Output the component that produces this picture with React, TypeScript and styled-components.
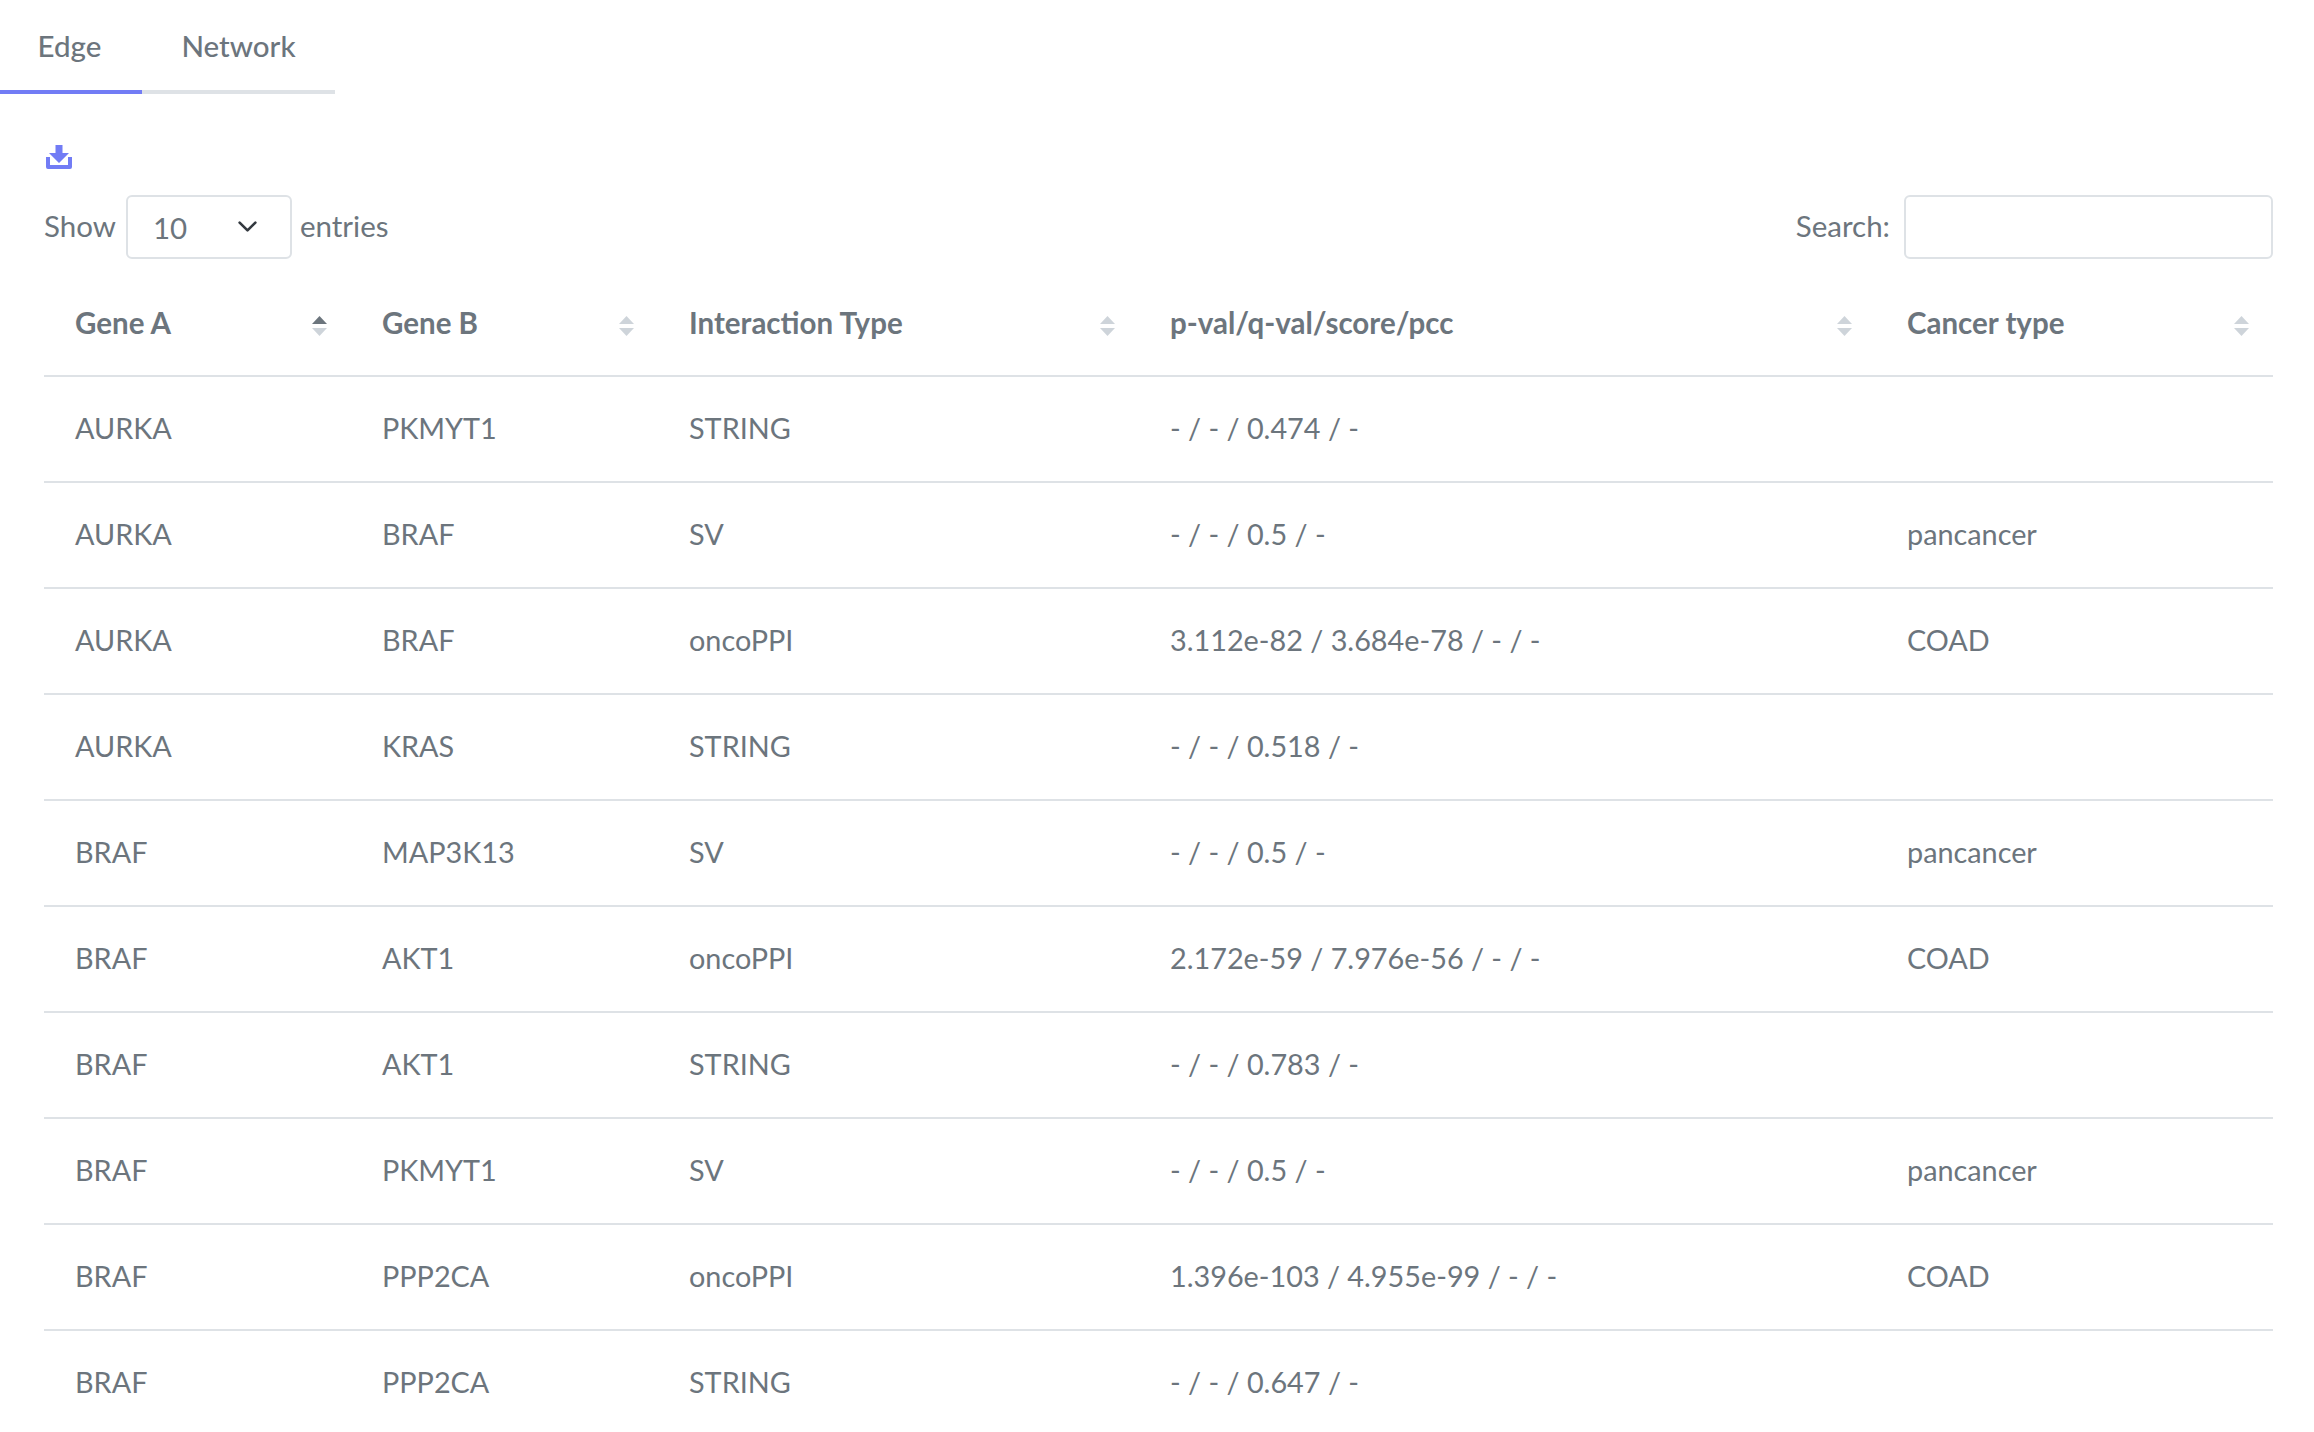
import * as React from 'react';
import styled, { createGlobalStyle } from 'styled-components';

const GlobalStyle = createGlobalStyle`
    html, body {
        margin: 0;
        padding: 0;
        height: 100%;
        overflow: hidden;
        background: #fff;
    }
    body {
        font-family: Lato, "Open Sans", sans-serif;
        color: #6c757d;
        font-size: 30px;
    }
`;

const Tabs = styled.ul`
    display: inline-flex;
    margin: 0;
    padding: 0;
    list-style: none;
    border-bottom: 4px solid #dee2e6;
    height: 90px;
`;

const Tab = styled.li<{ $active?: boolean; $width: number }>`
    width: ${p => p.$width}px;
    height: 90px;
    box-sizing: content-box;
    text-align: center;
    line-height: 92px;
    font-size: 29.5px;
    font-weight: 500;
    margin-bottom: -4px;
    padding-right: ${p => (p.$active ? '3px' : '0')};
    border-bottom: 4px solid ${p => (p.$active ? '#727cf5' : 'transparent')};
`;

const Content = styled.div`
    padding: 51px 41px 0 44px;
`;

const DownloadLink = styled.a`
    display: block;
    height: 24px;
    margin-left: 2px;
    color: #727cf5;
    svg {
        display: block;
    }
`;

const Controls = styled.div`
    display: flex;
    justify-content: space-between;
    align-items: center;
    margin-top: 26px;
    height: 63px;
`;

const Label = styled.label`
    display: flex;
    align-items: flex-start;
    font-size: 29.5px;
    line-height: 61px;
`;

const PageSize = styled.select`
    appearance: none;
    box-sizing: border-box;
    width: 166px;
    height: 64px;
    margin: 0 8px 0 10px;
    padding: 0 0 4px 25px;
    font: inherit;
    color: #6c757d;
    background: #fff url("data:image/svg+xml,%3csvg xmlns='http://www.w3.org/2000/svg' viewBox='0 0 16 16'%3e%3cpath fill='none' stroke='%23343a40' stroke-linecap='round' stroke-linejoin='round' stroke-width='2' d='M2 5l6 6 6-6'/%3e%3c/svg%3e") no-repeat right 32px center / 21px 21px;
    border: 2px solid #dee2e6;
    border-radius: 6px;
`;

const SearchInput = styled.input`
    box-sizing: border-box;
    width: 369px;
    height: 64px;
    margin-left: 14px;
    background: #fff;
    border: 2px solid #dee2e6;
    border-radius: 6px;
`;

const Table = styled.table`
    width: 2229px;
    margin-top: 12px;
    table-layout: fixed;
    border-collapse: collapse;
`;

const HeadCell = styled.th<{ $width: number }>`
    position: relative;
    width: ${p => p.$width}px;
    height: 106px;
    box-sizing: border-box;
    padding: 0 31px;
    text-align: left;
    font-size: 29.5px;
    font-weight: 700;
    border-bottom: 2px solid #dee2e6;
`;

const SortIcon = styled.svg`
    position: absolute;
    right: 24px;
    top: 46px;
    width: 15px;
    height: 20px;
`;

const Cell = styled.td`
    height: 106px;
    box-sizing: border-box;
    padding: 0 31px 2px;
    font-size: 28.8px;
    border-bottom: 2px solid #dee2e6;
`;

const columns = [
    { title: 'Gene A', width: 307, active: true },
    { title: 'Gene B', width: 307 },
    { title: 'Interaction Type', width: 481 },
    { title: 'p-val/q-val/score/pcc', width: 737 },
    { title: 'Cancer type', width: 397 },
];

const rows = [
    ['AURKA', 'PKMYT1', 'STRING', '- / - / 0.474 / -', ''],
    ['AURKA', 'BRAF', 'SV', '- / - / 0.5 / -', 'pancancer'],
    ['AURKA', 'BRAF', 'oncoPPI', '3.112e-82 / 3.684e-78 / - / -', 'COAD'],
    ['AURKA', 'KRAS', 'STRING', '- / - / 0.518 / -', ''],
    ['BRAF', 'MAP3K13', 'SV', '- / - / 0.5 / -', 'pancancer'],
    ['BRAF', 'AKT1', 'oncoPPI', '2.172e-59 / 7.976e-56 / - / -', 'COAD'],
    ['BRAF', 'AKT1', 'STRING', '- / - / 0.783 / -', ''],
    ['BRAF', 'PKMYT1', 'SV', '- / - / 0.5 / -', 'pancancer'],
    ['BRAF', 'PPP2CA', 'oncoPPI', '1.396e-103 / 4.955e-99 / - / -', 'COAD'],
    ['BRAF', 'PPP2CA', 'STRING', '- / - / 0.647 / -', ''],
];

function SortArrows({ active }: { active?: boolean }) {
    return (
        <SortIcon viewBox="0 0 15 20">
            <path d="M7.5 0 15 8H0z" fill={active ? '#6c757d' : '#ced4da'} />
            <path d="M0 12h15l-7.5 8z" fill="#ced4da" />
        </SortIcon>
    );
}

export default function App() {
    return (
        <div>
            <GlobalStyle />
            <Tabs>
                <Tab $active $width={139}>Edge</Tab>
                <Tab $width={193}>Network</Tab>
            </Tabs>
            <Content>
                <DownloadLink>
                    <svg width="26" height="24" viewBox="0 0 26 24" fill="currentColor">
                        <path d="M9.5 0h7v8H23L13 18 3 8h6.5z" />
                        <path d="M0 12h4v8h18v-8h4v10a2 2 0 0 1-2 2H2a2 2 0 0 1-2-2z" />
                    </svg>
                </DownloadLink>
                <Controls>
                    <Label>
                        Show
                        <PageSize defaultValue="10">
                            <option>10</option>
                            <option>25</option>
                            <option>50</option>
                        </PageSize>
                        entries
                    </Label>
                    <Label>
                        Search:
                        <SearchInput type="search" />
                    </Label>
                </Controls>
                <Table>
                    <thead>
                        <tr>
                            {columns.map(c => (
                                <HeadCell key={c.title} $width={c.width}>
                                    {c.title}
                                    <SortArrows active={c.active} />
                                </HeadCell>
                            ))}
                        </tr>
                    </thead>
                    <tbody>
                        {rows.map((row, i) => (
                            <tr key={i}>
                                {row.map((value, j) => (
                                    <Cell key={j}>{value}</Cell>
                                ))}
                            </tr>
                        ))}
                    </tbody>
                </Table>
            </Content>
        </div>
    );
}
